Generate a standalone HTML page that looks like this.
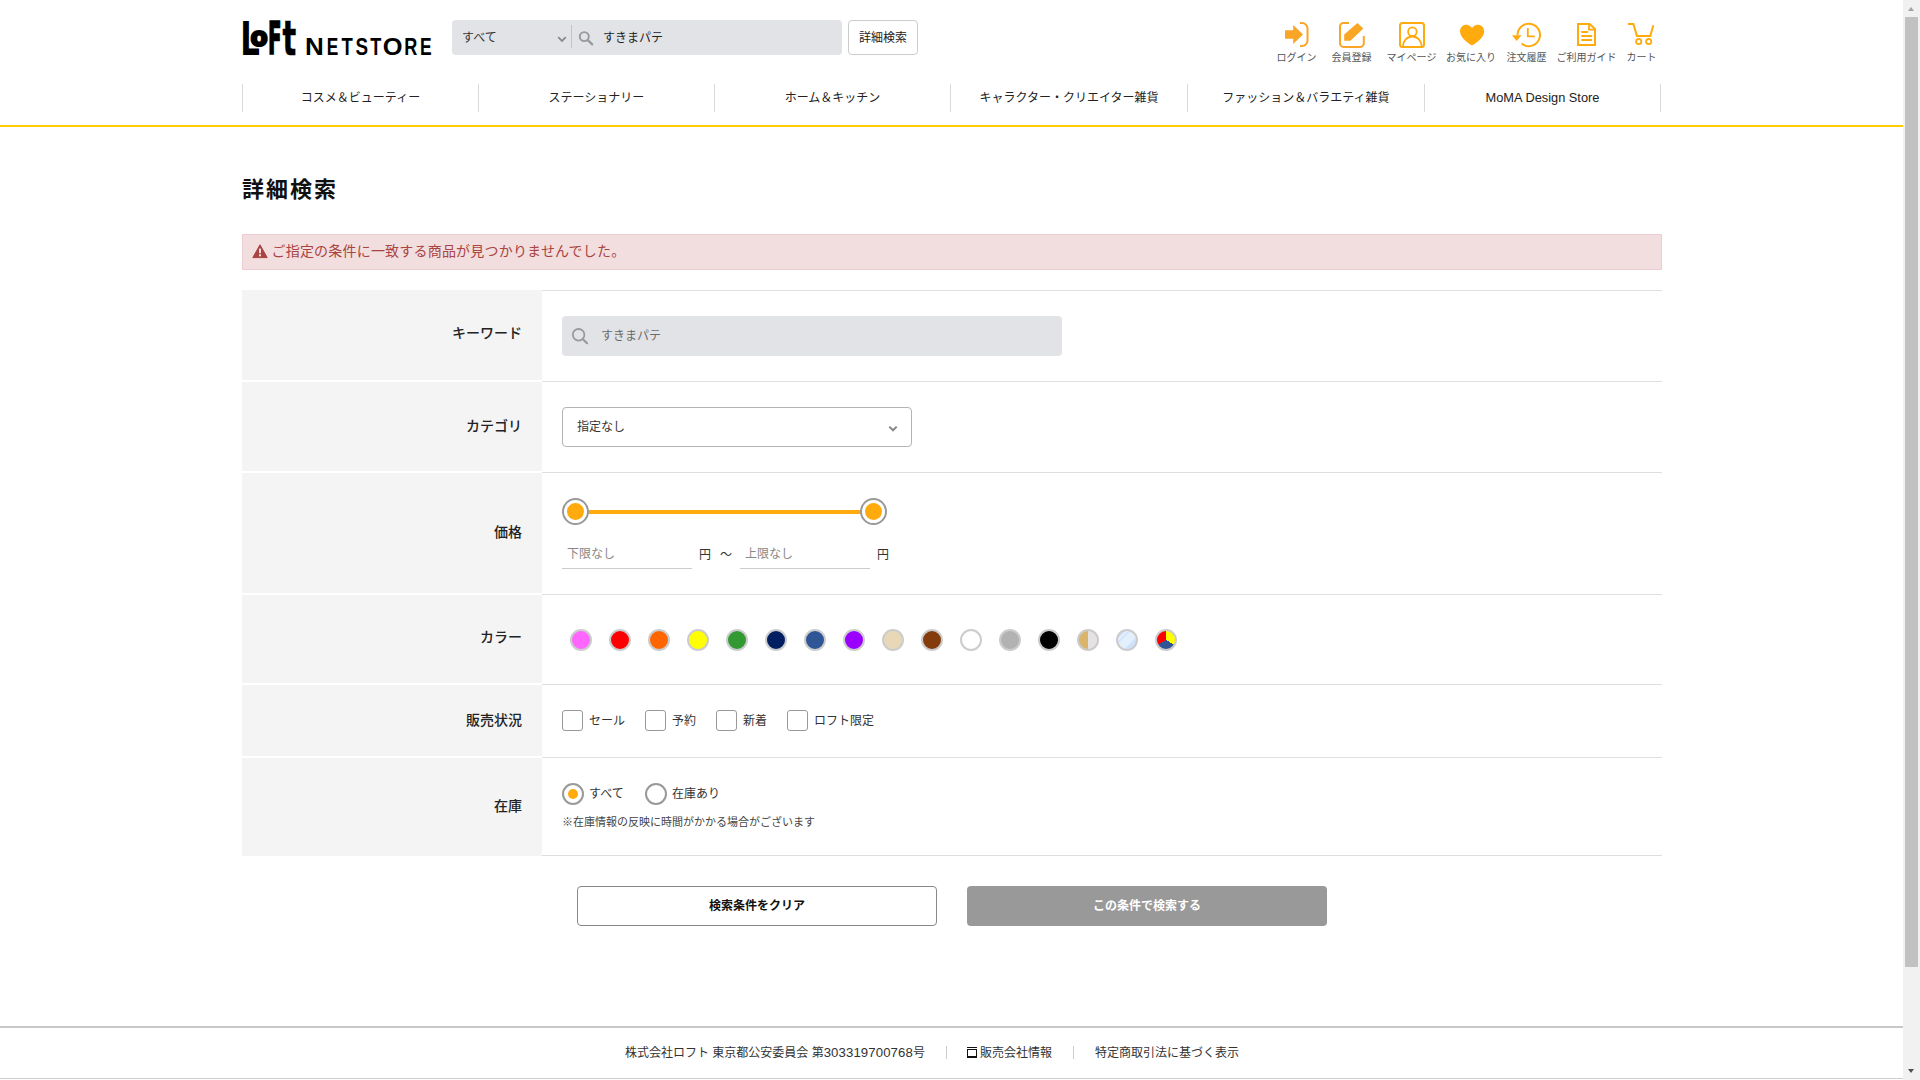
<!DOCTYPE html>
<html lang="ja">
<head>
<meta charset="utf-8">
<title>詳細検索 | ロフトネットストア</title>
<style>
*{box-sizing:border-box;margin:0;padding:0}
html,body{width:1920px;height:1080px;overflow:hidden;background:#fff}
body{position:relative;font-family:"Liberation Sans","Noto Sans CJK JP",sans-serif;color:#222;font-size:12px;line-height:1}
.abs{position:absolute}
.t{position:absolute;white-space:nowrap;line-height:1}
#sb{position:absolute;left:1903px;top:0;width:17px;height:1080px;background:#f1f1f1}
#sb .thumb{position:absolute;left:2px;top:17px;width:13px;height:950px;background:#c1c1c1}
#sb .up{position:absolute;left:5px;top:7px;width:0;height:0;border-left:3.5px solid transparent;border-right:3.5px solid transparent;border-bottom:4px solid #a3a3a3}
#sb .dn{position:absolute;left:5px;top:1069px;width:0;height:0;border-left:3.5px solid transparent;border-right:3.5px solid transparent;border-top:4px solid #505050}
#search{position:absolute;left:452px;top:20px;width:390px;height:35px;background:#e2e3e7;border-radius:4px}
#search .div{position:absolute;left:119px;top:5px;width:1px;height:23px;background:#c4c4c8}
#adv{position:absolute;left:848px;top:20px;width:70px;height:35px;border:1px solid #ccc;border-radius:4px;background:#fff;font-size:12px;text-align:center;line-height:35px;color:#222}
.hi{position:absolute;top:52.6px;font-size:10px;line-height:10px;color:#555;text-align:center;white-space:nowrap;transform:translateX(-50%)}
.nv{position:absolute;top:84px;height:28px;width:237px;border-left:1px solid #dadada;text-align:center;font-size:12px;line-height:29px;color:#222;white-space:nowrap}
#yl{position:absolute;left:0;top:125px;width:1903px;height:2px;background:#fc0}
h1{position:absolute;left:242px;top:176px;font-size:22px;letter-spacing:2px;font-weight:bold;line-height:28px;color:#111;white-space:nowrap}
#alert{position:absolute;left:242px;top:234px;width:1420px;height:36px;background:#f2dede;border:1px solid #ebccd1;color:#a94442;font-size:14px}
.th{position:absolute;left:242px;width:300px;background:#f4f4f4}
.bd{position:absolute;left:542px;width:1120px;height:1px;background:#dfdfdf}
.lb{position:absolute;right:20px;font-size:14px;font-weight:500;color:#222;white-space:nowrap;line-height:20px}
#kw{position:absolute;left:562px;top:316px;width:500px;height:40px;background:#e2e3e7;border-radius:4px}
#cat{position:absolute;left:562px;top:407px;width:350px;height:40px;border:1px solid #b4b4b4;border-radius:4px;background:#fff}
.hd{position:absolute;top:498px;width:27px;height:27px;border:2px solid #999;border-radius:50%;background:#fff}
.hd i{position:absolute;left:3px;top:3px;width:17px;height:17px;border-radius:50%;background:#ffaa0d}
.pi{position:absolute;top:538px;width:130px;height:31px;border-bottom:1px solid #ccc}
.sw{position:absolute;top:629px;width:22px;height:22px;border:2px solid #ccc;border-radius:50%;overflow:hidden}
.cb{position:absolute;top:710px;width:21px;height:21px;border:1px solid #999;border-radius:3px;background:#fff}
.cl{position:absolute;top:714px;font-size:12px;line-height:14px;color:#333;white-space:nowrap}
.rd{position:absolute;top:783px;width:22px;height:22px;border:2px solid #999;border-radius:50%;background:#fff}
.btn{position:absolute;top:886px;width:360px;height:40px;border-radius:4px;font-size:12px;font-weight:bold;text-align:center;line-height:38px;white-space:nowrap}
#ft{position:absolute;left:0;top:1026px;width:1903px;height:53px;border-top:2px solid #c8c8c8;border-bottom:1px solid #ccc}
.fl{position:absolute;top:1046px;font-size:12px;line-height:14px;color:#333;white-space:nowrap}
.fs{position:absolute;top:1046px;width:1px;height:13px;background:#ccc}
</style>
</head>
<body>
<svg class="abs" style="left:236px;top:14px" width="210" height="50" viewBox="0 0 210 50" role="img" aria-label="LoFt NETSTORE"><title>LoFt NETSTORE</title><text font-family="DejaVu Sans, sans-serif" font-weight="bold" fill="#000" stroke="#000" stroke-linejoin="miter"><tspan x="4.23" y="41.0" font-size="46.58" textLength="19.61" lengthAdjust="spacingAndGlyphs" stroke-width="0.0">L</tspan><tspan x="14.5" y="32.04" font-size="26.32" textLength="17.18" lengthAdjust="spacingAndGlyphs" stroke-width="2.2">o</tspan><tspan x="32.12" y="40.2" font-size="44.38" textLength="13.53" lengthAdjust="spacingAndGlyphs" stroke-width="1.6">F</tspan><tspan x="46.51" y="40.7" font-size="47.71" textLength="13.71" lengthAdjust="spacingAndGlyphs" stroke-width="0.6">t</tspan></text><text font-family="Liberation Sans, sans-serif" font-weight="bold" fill="#000"><tspan x="69.08" y="41.0" font-size="24.64" textLength="18.8" lengthAdjust="spacingAndGlyphs">N</tspan><tspan x="90.69" y="41.0" font-size="24.64" textLength="11.55" lengthAdjust="spacingAndGlyphs">E</tspan><tspan x="105.62" y="41.0" font-size="24.64" textLength="11.29" lengthAdjust="spacingAndGlyphs">T</tspan><tspan x="119.44" y="41.05" font-size="24.79" textLength="12.56" lengthAdjust="spacingAndGlyphs">S</tspan><tspan x="134.22" y="41.0" font-size="24.64" textLength="11.08" lengthAdjust="spacingAndGlyphs">T</tspan><tspan x="146.88" y="41.05" font-size="24.79" textLength="19.78" lengthAdjust="spacingAndGlyphs">O</tspan><tspan x="168.33" y="41.0" font-size="24.64" textLength="13.07" lengthAdjust="spacingAndGlyphs">R</tspan><tspan x="183.97" y="41.0" font-size="24.64" textLength="11.67" lengthAdjust="spacingAndGlyphs">E</tspan></text></svg>
<div id="search">
<span class="t" style="left:10px;top:12px;font-size:12px;color:#333">すべて</span>
<svg class="abs" style="left:105px;top:16px" width="10" height="7" viewBox="0 0 10 7"><path d="M1.2 1.2 L5 5 L8.8 1.2" fill="none" stroke="#8a8a8a" stroke-width="1.8"/></svg>
<div class="div"></div>
<svg class="abs" style="left:126px;top:10px" width="16" height="16" viewBox="0 0 16 16"><circle cx="6.3" cy="6.6" r="4.5" fill="none" stroke="#999" stroke-width="1.9"/><path d="M9.8 10.1 L14.2 14.4" stroke="#999" stroke-width="2.2" stroke-linecap="round"/></svg>
<span class="t" style="left:151px;top:12px;font-size:12px;color:#222">すきまパテ</span>
</div>
<div id="adv">詳細検索</div>
<svg class="abs" style="left:1280px;top:20px" width="32" height="30" viewBox="0 0 32 30" ><path d="M5 10.2 H13.2 V5 L23 14.5 L13.2 24 V18.8 H5 Z" fill="#f9a526"/><path d="M20 3 H22 A5.5 5.5 0 0 1 27.5 8.5 V20.5 A5.5 5.5 0 0 1 22 26 H20" fill="none" stroke="#f9a526" stroke-width="2"/></svg>
<svg class="abs" style="left:1336px;top:20px" width="32" height="30" viewBox="0 0 32 30" ><path d="M13 3 H7.5 A3.5 3.5 0 0 0 4 6.5 V23.4 A3.5 3.5 0 0 0 7.5 26.9 H24.3 A3.5 3.5 0 0 0 27.8 23.4 V16" fill="none" stroke="#f9a526" stroke-width="2"/><path d="M8.2 20.8 V14.5 L21.4 2.9 L27.3 8.5 L14.5 20.8 Z" fill="#f9a526"/></svg>
<svg class="abs" style="left:1396px;top:20px" width="32" height="30" viewBox="0 0 32 30" ><rect x="4" y="3" width="24" height="24" rx="2.5" fill="none" stroke="#ffaa0d" stroke-width="2"/><circle cx="16.4" cy="11.7" r="4.3" fill="none" stroke="#ffaa0d" stroke-width="1.8"/><path d="M6.9 26.5 A9.4 10 0 0 1 25.7 26.5" fill="none" stroke="#ffaa0d" stroke-width="1.8"/></svg>
<svg class="abs" style="left:1456px;top:20px" width="32" height="30" viewBox="0 0 32 30" ><path d="M16 25.2 C14.5 25.2 4 18 4 11.5 C4 7.5 7 4.8 10.2 4.8 C12.6 4.8 14.8 6.2 16 8 C17.2 6.2 19.4 4.8 21.8 4.8 C25 4.8 28.2 7.5 28.2 11.5 C28.2 18 17.5 25.2 16 25.2 Z" fill="#ffaa0d"/></svg>
<svg class="abs" style="left:1510px;top:20px" width="36" height="30" viewBox="0 0 36 30" ><path d="M7.6 15.2 A11.2 11.2 0 1 1 11.6 23.5" fill="none" stroke="#ffaa0d" stroke-width="2"/><path d="M2 15.2 H11.5 L6.7 21 Z" fill="#ffaa0d"/><path d="M17.8 8 V16.4 H24.8" fill="none" stroke="#ffaa0d" stroke-width="1.8"/></svg>
<svg class="abs" style="left:1572px;top:20px" width="30" height="30" viewBox="0 0 30 30" ><path d="M6 4 H17.6 L23 9 V25 H6 Z" fill="none" stroke="#ffaa0d" stroke-width="2" stroke-linejoin="miter"/><path d="M17 4 V9.6 H23" fill="none" stroke="#ffaa0d" stroke-width="1.8"/><path d="M10 12 H15.3 M10 16 H19.3 M10 20 H19.3" stroke="#ffaa0d" stroke-width="2" stroke-linecap="round"/></svg>
<svg class="abs" style="left:1624px;top:20px" width="34" height="30" viewBox="0 0 34 30" ><path d="M4 3.9 H9.4 L12.9 15.9 H26.3 L29.3 5.3" fill="none" stroke="#ffaa0d" stroke-width="2"/><circle cx="14.7" cy="21.5" r="2.6" fill="none" stroke="#ffaa0d" stroke-width="1.8"/><circle cx="24.7" cy="21.5" r="2.6" fill="none" stroke="#ffaa0d" stroke-width="1.8"/></svg>
<div class="hi" style="left:1296.5px">ログイン</div>
<div class="hi" style="left:1351.5px">会員登録</div>
<div class="hi" style="left:1411.5px">マイページ</div>
<div class="hi" style="left:1471px">お気に入り</div>
<div class="hi" style="left:1526.5px">注文履歴</div>
<div class="hi" style="left:1586.5px">ご利用ガイド</div>
<div class="hi" style="left:1641.5px">カート</div>
<div class="nv" style="left:242px;width:236px">コスメ＆ビューティー</div>
<div class="nv" style="left:478px;width:236px">ステーショナリー</div>
<div class="nv" style="left:714px;width:236px">ホーム＆キッチン</div>
<div class="nv" style="left:950px;width:237px">キャラクター・クリエイター雑貨</div>
<div class="nv" style="left:1187px;width:237px">ファッション＆バラエティ雑貨</div>
<div class="nv" style="left:1424px;width:237px;border-right:1px solid #dadada;font-size:12.8px;line-height:27px">MoMA Design Store</div>
<div id="yl"></div>
<h1>詳細検索</h1>
<div id="alert"><svg class="abs" style="left:8.5px;top:9px" width="16" height="15" viewBox="0 0 16 15" ><path d="M8 0.8 L15.2 13.6 H0.8 Z" fill="#a94442" stroke="#a94442" stroke-width="1" stroke-linejoin="round"/><rect x="7" y="4.6" width="2" height="4.6" fill="#f2dede"/><rect x="7" y="10.3" width="2" height="2" fill="#f2dede"/></svg><span class="t" style="left:28.5px;top:9px;letter-spacing:0.2px">ご指定の条件に一致する商品が見つかりませんでした。</span></div>
<div class="th" style="top:290px;height:90px"><span class="lb" style="top:33px">キーワード</span></div>
<div class="th" style="top:382px;height:89px"><span class="lb" style="top:34px">カテゴリ</span></div>
<div class="th" style="top:473px;height:120px"><span class="lb" style="top:49px">価格</span></div>
<div class="th" style="top:595px;height:88px"><span class="lb" style="top:32px">カラー</span></div>
<div class="th" style="top:685px;height:71px"><span class="lb" style="top:25px">販売状況</span></div>
<div class="th" style="top:758px;height:98px"><span class="lb" style="top:38px">在庫</span></div>
<div class="bd" style="top:290px"></div>
<div class="bd" style="top:381px"></div>
<div class="bd" style="top:472px"></div>
<div class="bd" style="top:594px"></div>
<div class="bd" style="top:684px"></div>
<div class="bd" style="top:757px"></div>
<div class="bd" style="top:855px"></div>
<div id="kw"><svg class="abs" style="left:9px;top:11px" width="20" height="20" viewBox="0 0 20 20" ><circle cx="7.6" cy="7.8" r="5.8" fill="none" stroke="#999" stroke-width="1.8"/><path d="M12 12.2 L16 16.2" stroke="#999" stroke-width="2.2" stroke-linecap="round"/></svg><span class="t" style="left:39px;top:14px;font-size:12px;color:#6a6a6a">すきまパテ</span></div>
<div id="cat"><span class="t" style="left:14px;top:13px;font-size:12px;color:#333">指定なし</span><svg class="abs" style="left:325px;top:17px" width="10" height="8" viewBox="0 0 10 8" ><path d="M1.3 1.6 L5 5.3 L8.7 1.6" fill="none" stroke="#888" stroke-width="2"/></svg></div>
<div class="abs" style="left:575px;top:510px;width:298px;height:4px;background:#ffaa0d"></div>
<div class="hd" style="left:562px"><i></i></div><div class="hd" style="left:860px"><i></i></div>
<div class="pi" style="left:562px"><span class="t" style="left:5px;top:10px;font-size:12px;color:#888">下限なし</span></div>
<span class="t" style="left:699px;top:549px;font-size:12px;color:#333">円</span><span class="t" style="left:720px;top:549px;font-size:12px;color:#333">～</span>
<div class="pi" style="left:740px"><span class="t" style="left:5px;top:10px;font-size:12px;color:#888">上限なし</span></div>
<span class="t" style="left:877px;top:549px;font-size:12px;color:#333">円</span>
<div class="sw" style="left:570px;background:#ff66ff"></div>
<div class="sw" style="left:609px;background:#ff0000"></div>
<div class="sw" style="left:648px;background:#ff6600"></div>
<div class="sw" style="left:687px;background:#ffff00"></div>
<div class="sw" style="left:726px;background:#339933"></div>
<div class="sw" style="left:765px;background:#001f60"></div>
<div class="sw" style="left:804px;background:#2f5597"></div>
<div class="sw" style="left:843px;background:#9900ff"></div>
<div class="sw" style="left:882px;background:#e8d8b8"></div>
<div class="sw" style="left:921px;background:#843c0c"></div>
<div class="sw" style="left:960px;background:#ffffff"></div>
<div class="sw" style="left:999px;background:#b2b2b2"></div>
<div class="sw" style="left:1038px;background:#000000"></div>
<div class="sw" style="left:1077px;background:linear-gradient(90deg,#d9b56c 0,#d9b56c 48%,#e4e2e2 48%)"></div>
<div class="sw" style="left:1116px;background:linear-gradient(135deg,#cfe2fb 0,#cfe2fb 22%,#e4effc 22%,#e4effc 30%,#cfe2fb 30%,#cfe2fb 36%,#e4effc 36%,#e4effc 68%,#cfe2fb 68%)"></div>
<div class="sw" style="left:1155px;background:conic-gradient(#ffff00 0 120deg,#2f5597 120deg 240deg,#ff0000 240deg 360deg)"></div>
<div class="cb" style="left:562px"></div><span class="cl" style="left:589px">セール</span>
<div class="cb" style="left:645px"></div><span class="cl" style="left:672px">予約</span>
<div class="cb" style="left:716px"></div><span class="cl" style="left:743px">新着</span>
<div class="cb" style="left:787px"></div><span class="cl" style="left:814px">ロフト限定</span>
<div class="rd" style="left:562px"><i class="abs" style="left:4px;top:4px;width:10px;height:10px;border-radius:50%;background:#ffaa0d"></i></div><span class="cl" style="left:589px;top:787px">すべて</span>
<div class="rd" style="left:645px"></div><span class="cl" style="left:672px;top:787px">在庫あり</span>
<span class="t" style="left:562px;top:817px;font-size:11px;color:#444">※在庫情報の反映に時間がかかる場合がございます</span>
<div class="btn" style="left:577px;border:1px solid #888;background:#fff;color:#111">検索条件をクリア</div>
<div class="btn" style="left:967px;background:#999;color:#fff;line-height:40px">この条件で検索する</div>
<div id="ft"></div>
<span class="fl" style="left:625px">株式会社ロフト 東京都公安委員会 第<span style="font-size:13.2px;letter-spacing:0.1px">303319700768</span>号</span><div class="fs" style="left:946px"></div>
<svg class="abs" style="left:967px;top:1047px" width="10" height="11" viewBox="0 0 10 11" ><rect x="0" y="0" width="10" height="1" fill="#111"/><rect x="0.5" y="2.5" width="9" height="7.5" fill="none" stroke="#111" stroke-width="1"/><rect x="0" y="9" width="10" height="2" fill="#111"/></svg><span class="fl" style="left:980px">販売会社情報</span><div class="fs" style="left:1073px"></div>
<span class="fl" style="left:1095px">特定商取引法に基づく表示</span>
<div id="sb"><div class="up"></div><div class="thumb"></div><div class="dn"></div></div>
</body>
</html>
